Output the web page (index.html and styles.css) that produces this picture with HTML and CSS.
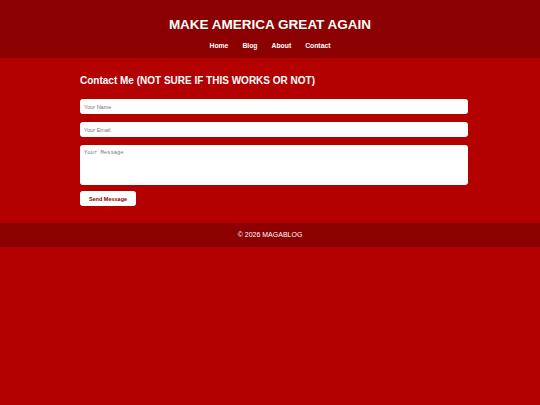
FILE: index.html
```html
<!DOCTYPE html>
<html>
<head>
<meta charset="utf-8">
<link rel="stylesheet" href="styles.css">
</head>
<body>
<header class="site-header">
  <h1 class="site-title">MAKE AMERICA GREAT AGAIN</h1>
  <nav class="nav">
    <a href="#">Home</a>
    <a href="#">Blog</a>
    <a href="#">About</a>
    <a href="#">Contact</a>
  </nav>
</header>
<main class="content">
  <h2 class="heading">Contact Me (NOT SURE IF THIS WORKS OR NOT)</h2>
  <form class="form">
    <input class="field" type="text" placeholder="Your Name">
    <input class="field" type="email" placeholder="Your Email">
    <textarea class="field area" placeholder="Your Message"></textarea>
    <button class="btn" type="button">Send Message</button>
  </form>
</main>
<footer class="site-footer">© 2026 MAGABLOG</footer>
</body>
</html>
```
FILE: styles.css
```css
html, body {
  margin: 0;
  padding: 0;
  background: #b30000;
  font-family: "Liberation Sans", Arial, sans-serif;
  color: #fff;
}
.site-header {
  background: #8b0000;
  height: 58px;
  box-sizing: border-box;
  padding-top: 16px;
  text-align: center;
}
.site-title {
  margin: 0;
  font-size: 13.5px;
  line-height: 18px;
  font-weight: bold;
}
.nav {
  display: flex;
  justify-content: center;
  gap: 14px;
  margin-top: 8px;
}
.nav a {
  color: #fff;
  text-decoration: none;
  font-size: 6.8px;
  font-weight: bold;
  line-height: 8px;
}
.content {
  width: 380px;
  margin: 0 auto;
  padding: 17px 0;
}
.heading {
  margin: 0 0 12px;
  font-size: 10px;
  line-height: 12px;
  font-weight: bold;
}
.form {
  display: flex;
  flex-direction: column;
  align-items: flex-start;
}
.field {
  display: block;
  width: 100%;
  box-sizing: content-box;
  padding: 0 4px;
  height: 15px;
  border: none;
  border-radius: 3px;
  background: #fff;
  font-family: "Liberation Sans", Arial, sans-serif;
  font-size: 5.5px;
  color: #333;
  margin: 0 0 8px;
}
.field::placeholder {
  color: #777;
}
.area {
  height: 36px;
  padding: 4px 4px 0;
  font-family: "Liberation Mono", monospace;
  resize: none;
  margin-bottom: 6px;
}
.btn {
  display: block;
  width: 56px;
  height: 15px;
  border: none;
  border-radius: 3px;
  background: #fff;
  color: #8b0000;
  font-family: "Liberation Sans", Arial, sans-serif;
  font-size: 5.5px;
  font-weight: bold;
  padding: 0;
}
.site-footer {
  background: #8b0000;
  height: 24px;
  line-height: 24px;
  text-align: center;
  font-size: 7px;
}
```
